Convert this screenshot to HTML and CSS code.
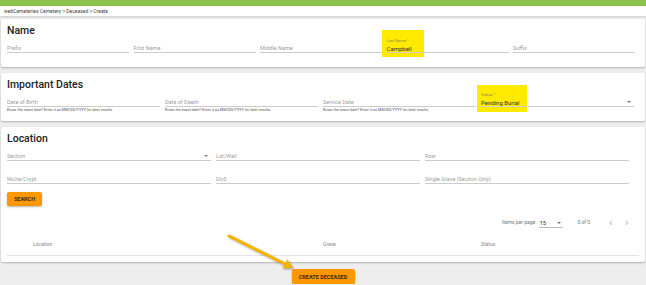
FILE: index.html
```html
<!DOCTYPE html>
<html>
<head>
    <meta charset="UTF-8">
    <meta name="viewport" content="width=device-width, initial-scale=1.0">
    <title>Create Deceased</title>
    <link rel="stylesheet" href="styles.css">
</head>
<body>
    <div class="topbar"></div>
    <div class="crumbs">webCemeteries Cemetery &gt; Deceased &gt; Create</div>

    <main class="page">
        <!-- Name -->
        <section class="card">
            <h2>Name</h2>
            <div class="fields fields-5">
                <div class="field"><div class="control">Prefix</div><div class="hint"></div></div>
                <div class="field"><div class="control">First Name</div><div class="hint"></div></div>
                <div class="field"><div class="control">Middle Name</div><div class="hint"></div></div>
                <div class="field marked marked-last">
                    <span class="float">Last Name *</span>
                    <div class="control value">Campbell</div><div class="hint"></div>
                </div>
                <div class="field"><div class="control">Suffix</div><div class="hint"></div></div>
            </div>
        </section>

        <!-- Important Dates -->
        <section class="card">
            <h2>Important Dates</h2>
            <div class="fields fields-4">
                <div class="field"><div class="control">Date of Birth</div><div class="hint">Know the exact date? Enter it as MM/DD/YYYY for best results</div></div>
                <div class="field"><div class="control">Date of Death</div><div class="hint">Know the exact date? Enter it as MM/DD/YYYY for best results</div></div>
                <div class="field"><div class="control">Service Date</div><div class="hint">Know the exact date? Enter it as MM/DD/YYYY for best results</div></div>
                <div class="field marked marked-status">
                    <span class="float">Status *</span>
                    <div class="control value select">Pending Burial<span class="caret"></span></div><div class="hint"></div>
                </div>
            </div>
        </section>

        <!-- Location -->
        <section class="card">
            <h2>Location</h2>
            <div class="fields fields-3">
                <div class="field"><div class="control select">Section<span class="caret"></span></div><div class="hint"></div></div>
                <div class="field"><div class="control">Lot/Wall</div><div class="hint"></div></div>
                <div class="field"><div class="control">Row</div><div class="hint"></div></div>
                <div class="field"><div class="control">Niche/Crypt</div><div class="hint"></div></div>
                <div class="field"><div class="control">Div5</div><div class="hint"></div></div>
                <div class="field"><div class="control">Single Grave (Section Only)</div><div class="hint"></div></div>
            </div>
            <button class="btn">SEARCH</button>

            <div class="paginator">
                <span class="pg-label">Items per page:</span>
                <span class="pg-select">15<span class="caret"></span></span>
                <span class="pg-range">0 of 0</span>
                <span class="pg-nav">&lsaquo;</span>
                <span class="pg-nav">&rsaquo;</span>
            </div>

            <div class="table-head">
                <span class="col-location">Location</span>
                <span>Grave</span>
                <span>Status</span>
            </div>
        </section>

        <div class="actions">
            <button class="btn btn-create">CREATE DECEASED</button>
        </div>
    </main>

    <!-- annotation arrow -->
    <svg class="arrow" width="646" height="285" viewBox="0 0 646 285">
        <line x1="229" y1="236" x2="286" y2="264.5" stroke="#f5b400" stroke-width="3" stroke-linecap="round"/>
        <polygon points="293,268 282.5,268.4 287.2,259.3" fill="#f5b400"/>
    </svg>
</body>
</html>
```

FILE: styles.css
```css
body {
    margin: 0;
    background-color: #EEEEEE;
    font-family: Roboto, "Liberation Sans", sans-serif;
    color: #222;
    overflow: hidden;
    position: relative;
}

.topbar {
    height: 6px;
    background-color: #8BC34A;
}

.crumbs {
    height: 10px;
    line-height: 10px;
    padding-left: 4px;
    background-color: #FFF;
    font-size: 5px;
    color: #444;
    box-shadow: 0 1px 2px rgb(0 0 0 / 0.15);
}

.page {
    padding: 3px 1px 0 1px;
}

.card {
    background-color: #FFF;
    border-radius: 2px;
    box-shadow: 0 1px 2px rgb(0 0 0 / 0.25);
    padding: 5px 6px 6px 6px;
    margin-bottom: 6px;
}

.card h2 {
    margin: 0;
    height: 14px;
    line-height: 14px;
    font-size: 10.5px;
    font-weight: 500;
    color: #212121;
}

/* 表单 */

.fields {
    display: grid;
}
.fields-5 {
    grid-template-columns: repeat(5, 1fr);
    column-gap: 4.5px;
    width: 628px;
}
.fields-4 {
    grid-template-columns: repeat(4, 1fr);
    column-gap: 5px;
    width: 627px;
}
.fields-3 {
    grid-template-columns: repeat(3, 1fr);
    column-gap: 5px;
    width: 622px;
}

.field {
    position: relative;
    padding-top: 6px;
}
.field .control {
    position: relative;
    z-index: 1;
    display: flex;
    align-items: center;
    height: 8px;
    border-bottom: 1px solid #CCC;
    font-size: 5.5px;
    color: #9E9E9E;
}
.field .control.value {
    font-size: 6px;
    color: #333;
}
.field .hint {
    height: 8px;
    line-height: 6px;
    font-size: 3.8px;
    color: #555;
    white-space: nowrap;
}
.field .float {
    position: absolute;
    z-index: 1;
    top: 1px;
    left: 0;
    line-height: 4px;
    font-size: 4px;
    color: #8A8A55;
}

.select .caret,
.pg-select .caret {
    margin-left: auto;
    margin-right: 3px;
    width: 0;
    height: 0;
    border-left: 2px solid transparent;
    border-right: 2px solid transparent;
    border-top: 2px solid #777;
}

/* 黄色标记 */
.marked::before {
    content: "";
    position: absolute;
    z-index: 0;
    background-color: #FFEA00;
}
.marked-last::before {
    left: -5px;
    top: -8px;
    width: 42px;
    height: 27px;
}
.marked-status::before {
    left: -4px;
    top: -7px;
    width: 50px;
    height: 27px;
}

/* 按钮 */

.btn {
    display: block;
    border: 0;
    border-radius: 2px;
    background-color: #FF9800;
    box-shadow: 0 1px 2px rgb(0 0 0 / 0.3);
    font-family: inherit;
    font-size: 5.5px;
    font-weight: 700;
    color: #3A2A10;
    padding: 0;
    height: 14px;
    width: 35px;
}

/* 分页 */

.paginator {
    display: flex;
    align-items: center;
    height: 20px;
    margin-top: 6px;
    padding-left: 495px;
    font-size: 5px;
    color: #777;
}
.pg-select {
    display: flex;
    align-items: center;
    width: 24px;
    height: 9px;
    margin-left: 3px;
    margin-top: 2px;
    border-bottom: 1px solid #BBB;
    font-size: 6px;
    color: #333;
}
.pg-select .caret {
    margin-right: 2px;
}
.pg-range {
    margin-left: 14px;
}
.pg-nav {
    margin-left: 19px;
    font-size: 10px;
    color: #AAA;
}
.pg-nav + .pg-nav {
    margin-left: 13px;
}

/* 表头 */

.table-head {
    display: grid;
    grid-template-columns: 316px 158px 1fr;
    align-items: center;
    width: 632px;
    height: 23px;
    border-bottom: 1px solid #E4E4E4;
    font-size: 5px;
    color: #888;
}
.col-location {
    padding-left: 26px;
}

.actions {
    display: flex;
    justify-content: center;
    padding-top: 1px;
}
.btn-create {
    width: 63px;
    height: 15px;
}

.arrow {
    position: absolute;
    top: 0;
    left: 0;
    pointer-events: none;
    filter: drop-shadow(1px 1px 1px rgb(0 0 0 / 0.35));
}
```
